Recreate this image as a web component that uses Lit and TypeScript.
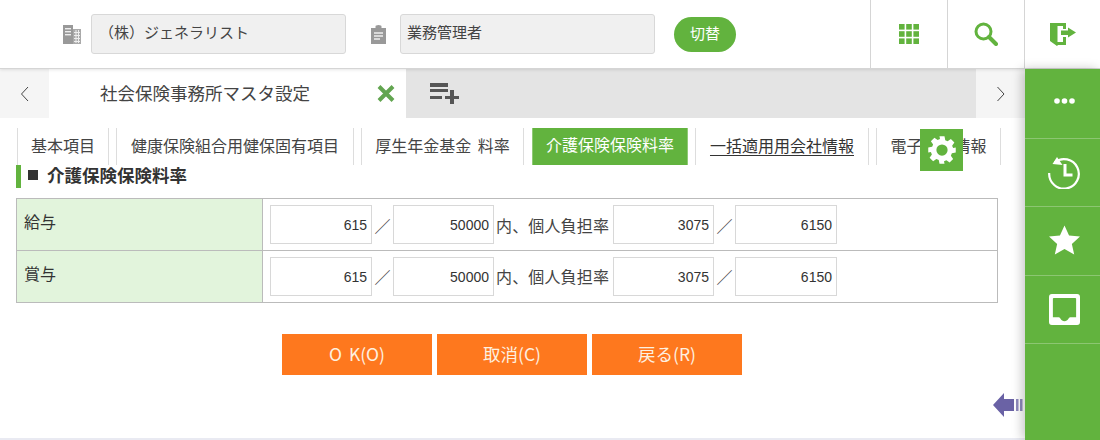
import { LitElement, html, css, svg } from "lit";
import { customElement } from "lit/decorators.js";

const row = (label: string) => html`
  <div class="row">
    <div class="th">${label}</div>
    <div class="td">
      <div class="inp w102">615</div><span class="sl">／</span>
      <div class="inp w101">50000</div><span class="txt">内、個人負担率</span>
      <div class="inp w101 m3">3075</div><span class="sl">／</span>
      <div class="inp w102">6150</div>
    </div>
  </div>`;

@customElement("app-root")
export class AppRoot extends LitElement {
  static styles = css`
    :host { display: block; width: 1100px; height: 440px; position: relative; overflow: hidden; background: #fff;
      font-family: "Noto Sans CJK JP", "Noto Sans", sans-serif; color: #333; font-size: 16px; }
    .header { height: 68px; display: flex; align-items: center; background: #fff; border-bottom: 1px solid #d5d5d5; box-shadow: 0 1px 3px rgba(0,0,0,.1); position: relative; z-index: 2; }
    .ico1 { margin-left: 63px; width: 18px; height: 19px; display: block; }
    .field { width: 255px; height: 40px; box-sizing: border-box; background: #f0f0f0; border: 1px solid #d8d8d8; border-radius: 3px; font-size: 15px; line-height: 34px; color: #444; }
    .f1 { margin-left: 10px; padding-left: 7px; }
    .ico2 { margin-left: 25px; width: 15px; height: 19px; display: block; }
    .f2 { margin-left: 14px; padding-left: 6px; }
    .switch { margin-left: 19px; width: 62px; height: 35px; border-radius: 18px; background: #62b33e; color: #fff; font-size: 15px; line-height: 32px; text-align: center; }
    .hbtn { width: 76px; height: 68px; border-left: 1px solid #d5d5d5; display: flex; align-items: center; justify-content: center; }
    .hbtn:last-child { width: 75px; }
    .hbtns { margin-left: auto; display: flex; }
    .tabbar { height: 49px; display: flex; background: #e4e4e4; width: 1025px; }
    .nav { width: 49px; background: #f5f5f5; display: flex; align-items: center; justify-content: center; }
    .tab { width: 357px; background: #fff; position: relative; display: flex; align-items: center; font-size: 17.5px; color: #444; padding: 0 0 2px 51px; box-sizing: border-box; white-space: nowrap; }
    .tab svg { position: absolute; left: 328px; top: 16px; }
    .add { margin-left: 24px; margin-top: 13px; display: block; }
    .spacer { flex: 1; }
    .tabs { display: flex; gap: 7px; margin: 10px 0 0 17px; height: 37px; }
    .t { box-sizing: border-box; height: 37px; border-left: 1px solid #ddd; border-right: 1px solid #ddd; font-size: 16px; line-height: 34px; color: #444; text-align: center; white-space: nowrap; word-spacing: 3px; }
    .t1 { width: 92px; } .t2 { width: 238px; } .t3 { width: 163px; } .t4 { width: 156px; margin-left: 1px; } .t5 { width: 174px; } .t6 { width: 125px; }
    .t.on { background: #62b33e; color: #fff; border-color: #8fca75; line-height: 32px; }
    .t u { text-underline-offset: 3px; color: #333; }
    .title { margin-left: 16px; height: 23px; border-left: 5px solid #62b33e; padding: 0 0 4px 7px; box-sizing: border-box; font-size: 17.5px; font-weight: 700; line-height: 19px; color: #333; white-space: nowrap; display: flex; align-items: center; }
    .sq { width: 10px; height: 10px; background: #333; margin-right: 9px; }
    .table { margin: 10px 0 0 16px; width: 982px; box-sizing: border-box; border: 1px solid #bbb; }
    .row { display: flex; height: 51px; box-sizing: border-box; }
    .row + .row { border-top: 1px solid #bbb; height: 52px; }
    .th { width: 246px; box-sizing: border-box; background: #e2f4dc; border-right: 1px solid #bbb; padding: 8px 0 0 7px; font-size: 16px; line-height: 28px; color: #333; }
    .td { flex: 1; display: flex; align-items: center; padding-left: 7px; }
    .row + .row .td { padding-bottom: 1px; }
    .inp { box-sizing: border-box; height: 39px; border: 1px solid #d8d8d8; text-align: right; padding-right: 4px; font-family: "Liberation Sans", sans-serif; font-size: 14px; line-height: 39px; color: #333; }
    .w102 { width: 102px; } .w101 { width: 101px; } .m3 { margin-left: 3px; }
    .sl { width: 21px; text-align: center; font-size: 16px; color: #444; }
    .txt { margin-left: 2px; width: 114px; font-size: 16px; white-space: nowrap; letter-spacing: .15px; color: #444; }
    .btns { margin: 31px 0 0 282px; display: flex; gap: 5px; }
    .b { width: 150px; height: 41px; background: #fe781e; color: #fdf0e0; text-align: center; font-size: 17.5px; line-height: 40px; word-spacing: 3px; }
    .gear { position: absolute; left: 920px; top: 129px; width: 43px; height: 42px; background: #62b33e; display: flex; align-items: center; justify-content: center; }
    .arrow { position: absolute; left: 993px; top: 393px; display: block; }
    .foot { position: absolute; left: 0; right: 0; bottom: 0; height: 2px; background: #e9eaf2; }
    .side { position: absolute; left: 1025px; top: 69px; width: 75px; height: 371px; background: #62b33e; box-shadow: -3px 0 10px rgba(0,0,0,.22); z-index: 3; display: flex; flex-direction: column; }
    .s { height: 68px; box-sizing: border-box; border-bottom: 1px solid #8cc672; padding-left: 3px; display: flex; align-items: center; justify-content: center; }
    .s1 { height: 70px; padding-bottom: 6px; }
    .s3 { height: 69px; padding-bottom: 2px; }
  `;

  render() {
    const g = "#62b33e";
    return html`
      <div class="header">
        <svg class="ico1" viewBox="0 0 18 19">
          <rect x="0" y="0" width="10" height="19" fill="#999"/>
          <rect x="2" y="3" width="6" height="1.4" fill="#eee"/><rect x="2" y="6" width="6" height="1.4" fill="#eee"/><rect x="2" y="9" width="6" height="1.4" fill="#eee"/>
          <rect x="10" y="4" width="8" height="15" fill="#aaa"/>
          <path d="M11 7.5h6M11 10.5h6M11 13.5h6M11 16.500h6M13 5v13M15.500 5v13" stroke="#eee" stroke-width="1"/>
        </svg>
        <div class="field f1">（株）ジェネラリスト</div>
        <svg class="ico2" viewBox="0 0 15 19">
          <path d="M0 3h4.5V1.500a3 1.500 0 0 1 6 0V3H15v16H0z" fill="#999"/>
          <path d="M3 8h9M3 11h9M3 14h6" stroke="#eee" stroke-width="1.400"/>
        </svg>
        <div class="field f2">業務管理者</div>
        <div class="switch">切替</div>
        <div class="hbtns">
          <div class="hbtn">
            <svg width="20" height="20" viewBox="0 0 20 20" fill="${g}">
              ${[0, 7.2, 14.4].map((y) => [0, 7.2, 14.4].map((x) => svg`<rect x="${x}" y="${y}" width="5.6" height="5.6"/>`))}
            </svg>
          </div>
          <div class="hbtn">
            <svg width="24" height="24" viewBox="0 0 24 24" fill="none" stroke="${g}">
              <circle cx="9.500" cy="9.500" r="7.500" stroke-width="3"/><path d="M15 15l7 7" stroke-width="4" stroke-linecap="round"/>
            </svg>
          </div>
          <div class="hbtn">
            <svg width="26" height="23" viewBox="0 0 26 23" fill="${g}">
              <path d="M0 0h16v6h-3V3H7.500v16H13v-5h3v8H7.500v1L7 23 0 18z"/>
              <path d="M11 7.500h7V4.500l8 5-8 5V12h-7z"/>
            </svg>
          </div>
        </div>
      </div>
      <div class="tabbar">
        <div class="nav"><svg width="10" height="16" viewBox="0 0 10 16" fill="none" stroke="#444"><path d="M8 1L1.500 8 8 15"/></svg></div>
        <div class="tab">社会保険事務所マスタ設定
          <svg width="18" height="17" viewBox="0 0 18 17" fill="none" stroke="#62a550" stroke-width="4"><path d="M2 1.500l14 14M16 1.500l-14 14"/></svg>
        </div>
        <svg class="add" width="30" height="23" viewBox="0 0 30 23" fill="#555">
          <rect x="0" y="1" width="18" height="4"/><rect x="0" y="7" width="18" height="3"/><rect x="0" y="14" width="12" height="3"/>
          <rect x="15" y="14" width="14" height="3"/><rect x="20" y="8" width="4" height="14"/>
        </svg>
        <div class="spacer"></div>
        <div class="nav"><svg width="10" height="16" viewBox="0 0 10 16" fill="none" stroke="#444"><path d="M1.500 1L8 8l-6.500 7"/></svg></div>
      </div>
      <div class="tabs">
        <div class="t t1">基本項目</div>
        <div class="t t2">健康保険組合用健保固有項目</div>
        <div class="t t3">厚生年金基金 料率</div>
        <div class="t t4 on">介護保険保険料率</div>
        <div class="t t5"><u>一括適用用会社情報</u></div>
        <div class="t t6">電子申請情報</div>
      </div>
      <div class="title"><span class="sq"></span>介護保険保険料率</div>
      <div class="table">${row("給与")}${row("賞与")}</div>
      <div class="btns">
        <div class="b">O K(O)</div><div class="b">取消(C)</div><div class="b">戻る(R)</div>
      </div>
      <div class="gear">
        <svg width="30" height="30" viewBox="0 0 24 24" fill="#fff">
          <path fill-rule="evenodd" d="M10 1h4l.6 3.100 1.900.8 2.600-1.800 2.800 2.800-1.800 2.600.8 1.900L23 10v4l-3.100.6-.8 1.900 1.800 2.600-2.800 2.800-2.600-1.800-1.900.8L14 23h-4l-.6-3.100-1.900-.8-2.600 1.800-2.800-2.800 1.800-2.600-.8-1.900L1 14v-4l3.100-.6.8-1.900-1.800-2.600 2.800-2.800 2.600 1.800 1.900-.8zM12 7.500a4.500 4.500 0 1 0 0 9 4.500 4.500 0 0 0 0-9z"/>
        </svg>
      </div>
      <svg class="arrow" width="30" height="24" viewBox="0 0 30 24" fill="#6a62a5">
        <path d="M0 12L11 0v6h10v12H11v6z"/><rect x="23" y="6" width="2.500" height="12" fill="#8f8abd"/><rect x="27" y="6" width="2.500" height="12" fill="#8f8abd"/>
      </svg>
      <div class="foot"></div>
      <div class="side">
        <div class="s s1">
          <svg width="21" height="6" viewBox="0 0 21 6" fill="#fff"><circle cx="3" cy="3" r="2.800"/><circle cx="10.500" cy="3" r="2.800"/><circle cx="18" cy="3" r="2.800"/></svg>
        </div>
        <div class="s">
          <svg width="32" height="32" viewBox="0 0 32 32" fill="none" stroke="#fff" stroke-width="2.200">
            <path d="M6.500 5.500A14.800 14.800 0 1 1 1.200 16"/><path d="M4.500 7L9 0l5.500 8z" fill="#fff" stroke="none"/><path d="M17 7v11h7.500" stroke-width="3"/>
          </svg>
        </div>
        <div class="s s3">
          <svg width="31" height="30" viewBox="0 0 32 30" fill="#fff"><path d="M16 0l4.700 10.300L32 11.500l-8.400 7.600L26 30l-10-5.600L6 30l2.400-10.900L0 11.500l11.300-1.200z"/></svg>
        </div>
        <div class="s">
          <svg width="31" height="31" viewBox="0 0 32 32"><path fill-rule="evenodd" fill="#fff" d="M3 0h26a3 3 0 0 1 3 3v26a3 3 0 0 1-3 3H3a3 3 0 0 1-3-3V3a3 3 0 0 1 3-3zM5 4a1 1 0 0 0-1 1v19h6c2 0 2 4 6 4s4-4 6-4h6V5a1 1 0 0 0-1-1z"/></svg>
        </div>
      </div>
    `;
  }
}
